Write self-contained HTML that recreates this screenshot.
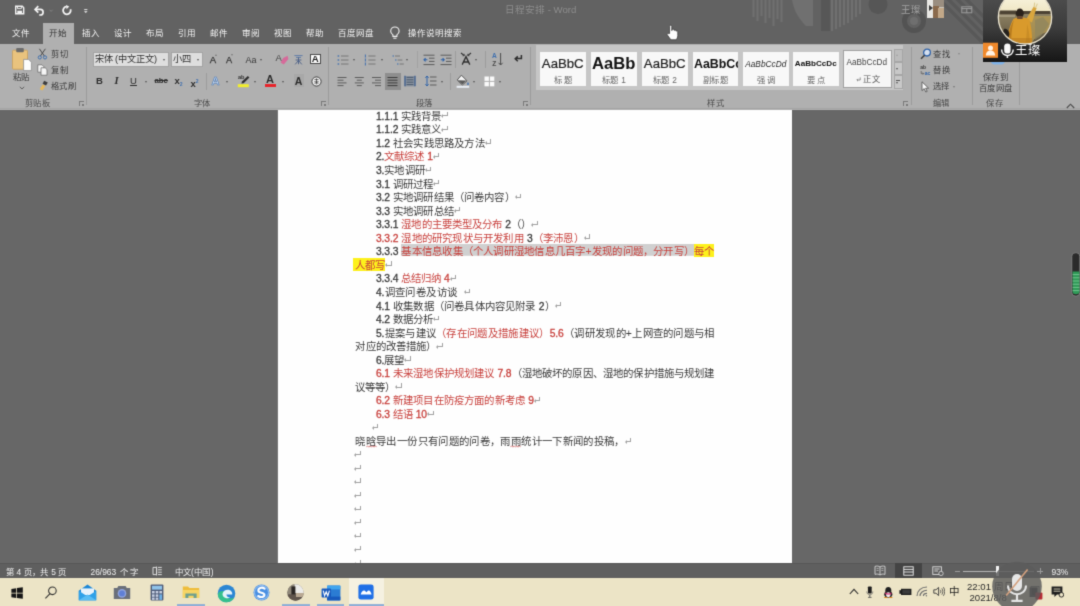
<!DOCTYPE html>
<html lang="zh-CN">
<head>
<meta charset="utf-8">
<title>日程安排 - Word</title>
<style>
html,body{margin:0;padding:0}
html{background:#676767}
body{width:1080px;height:606px;overflow:hidden;position:relative;background:#676767;font-family:"Liberation Sans",sans-serif;font-size:9px;color:#222;filter:url(#soft)}
div,svg{position:absolute;box-sizing:border-box}
/* ---------- window chrome ---------- */
#titlebar{left:0;top:0;width:1080px;height:44px;background:#626262;overflow:hidden}
#ribbon{left:0;top:44px;width:1080px;height:65.5px;background:#b0b0b0}
#ribbonline{left:0;top:107.6px;width:1080px;height:1.9px;background:#a3a3a3}
#tab-home{left:43px;top:23px;width:31px;height:21px;background:#b0b0b0}
/* title/tab text helpers */
.t{height:12px;line-height:12px;white-space:nowrap;text-align:justify;text-align-last:justify;overflow:visible}
.tab{top:26.6px;font-size:8.5px;color:#f4f4f4}
.tab.on{color:#333}
/* ---------- ribbon ---------- */
.rt{height:11px;line-height:11px;font-size:8.3px;color:#3a3a3a;white-space:nowrap;text-align:justify;text-align-last:justify}
.gl{top:97.5px;color:#4a4a4a}
.sep{top:47px;width:1px;height:58px;background:#9b9b9b}
.box{background:#dedede;border:1px solid #a4a4a4}
.ar{width:0;height:0;border-left:1.8px solid transparent;border-right:1.8px solid transparent;border-top:2.2px solid #555}
.lb{font-size:9.5px;font-weight:bold;color:#2c2c2c;height:12px;line-height:12px;white-space:nowrap;text-align:center}
.dl{width:5px;height:5px;border-left:1px solid #7a7a7a;border-top:1px solid #7a7a7a}
.dl::after{content:"";position:absolute;left:2px;top:2px;width:2px;height:2px;background:#7a7a7a}
/* ---------- document ---------- */
#page{left:276.6px;top:109.5px;width:515px;height:453.5px;background:#fefefe;overflow:hidden;border-left:0.6px solid #777}
.ln{height:14px;line-height:14px;font-size:10.4px;color:#3a3a3a;white-space:nowrap;text-align:justify;text-align-last:justify;overflow:visible}
.ln b{font-weight:normal;color:#c8403c}
.ln .n{font-size:10.3px;letter-spacing:-0.1px;-webkit-text-stroke:0.3px currentColor}
.hg{padding:2.2px 0 0;background:linear-gradient(#d0d0d0,#d0d0d0) no-repeat 0 0/100% 11.8px}
.hy{padding:2px 0 0;background:linear-gradient(#fdf11c,#fdf11c) no-repeat 0 0/100% 13.6px}
.r{display:inline-block;position:relative;width:4.6px;height:3.2px;border-right:0.9px solid #a2a2a2;border-bottom:0.9px solid #a2a2a2;margin-left:1px;vertical-align:3.2px}
.r::before{content:"";position:absolute;left:-1px;bottom:-2.6px;border-top:2.1px solid transparent;border-bottom:2.1px solid transparent;border-right:2.6px solid #a2a2a2}
/* ---------- status + taskbar ---------- */
#status{left:0;top:563px;width:1080px;height:15px;background:#5f5f5f;border-top:1px solid #575757}
.st{top:565.8px;height:12px;line-height:12px;font-size:8.4px;color:#f0f0f0;white-space:nowrap;text-align:justify;text-align-last:justify}
.ul{top:604.4px;height:1.6px;background:#93b1d6}
.tk{font-size:9.6px;color:#2a2a2a;height:11px;line-height:11px;white-space:nowrap;text-align:justify;text-align-last:justify}
#taskbar{left:0;top:578px;width:1080px;height:28px;background:#ece4c6}
</style>
</head>
<body>
<svg width="0" height="0" style="left:0;top:0"><defs><filter id="soft" x="0" y="0" width="100%" height="100%" color-interpolation-filters="sRGB"><feConvolveMatrix order="3" kernelMatrix="0.0192 0.1001 0.0192 0.1001 0.5228 0.1001 0.0192 0.1001 0.0192" divisor="1" edgeMode="duplicate" preserveAlpha="true"/></filter></defs></svg>

<!-- ================= TITLE BAR + TABS ================= -->
<div id="titlebar">
  <!-- decorative office background pattern (faint) -->
  <svg style="left:730px;top:0" width="270" height="44" viewBox="0 0 270 44">
    <g fill="#707070">
      <rect x="22.5" y="0" width="2" height="17"/><rect x="26.5" y="0" width="2" height="21"/><rect x="30.5" y="0" width="2" height="16"/>
      <rect x="34.5" y="0" width="2" height="23"/><rect x="38.5" y="0" width="2" height="18"/><rect x="42.5" y="0" width="2" height="26"/>
      <rect x="46.5" y="0" width="2" height="19"/><rect x="50.5" y="0" width="2" height="22"/>
      <path d="M62 0 H83 V26 H76 C70 20 64 12 62 0 Z"/>
      <rect x="101" y="0" width="2" height="31"/><rect x="105" y="0" width="2" height="29"/><rect x="109" y="0" width="2" height="27"/>
      <rect x="113" y="0" width="2" height="25"/><rect x="117" y="0" width="2" height="23"/><rect x="121" y="0" width="2" height="20"/>
      <rect x="125" y="0" width="2" height="17"/><rect x="129" y="0" width="2" height="14"/>
    </g>
    <rect x="91" y="0" width="9" height="31" fill="#575757"/>
    <circle cx="148" cy="4.5" r="9.5" fill="#565656"/>
    <circle cx="184" cy="21" r="9.5" fill="none" stroke="#535353" stroke-width="5"/>
    <circle cx="184" cy="21" r="4" fill="#6f6f6f"/>
    <path d="M206 -4 L254 44 M215 -4 L263 44 M224 -4 L272 44 M233 -4 L281 44" stroke="#585858" stroke-width="3.2" fill="none"/>
  </svg>
  <!-- quick access toolbar -->
  <svg style="left:13px;top:4px" width="80" height="14" viewBox="0 0 80 14" fill="none" stroke="#f4f4f4" stroke-width="1.4">
    <path d="M2.7 2.3 H9.3 L10.7 3.7 V9.7 H2.7 Z"/><path d="M4.5 2.3 V4.6 H8.4 V2.3" stroke-width="0.9"/><rect x="4.3" y="6.7" width="4.8" height="3" fill="#f4f4f4" stroke="none"/>
    <path d="M22.4 5.4 H27.3 A2.8 2.8 0 0 1 27.3 11 H26.2" stroke-width="1.7"/><path d="M25.3 2.2 L22.1 5.4 L25.3 8.6" stroke-width="1.7"/>
    <path d="M36.6 5.8 l1.5 1.6 l1.5 -1.6" stroke="#858585" stroke-width="0.9"/>
    <path d="M57.5 5.3 A3.8 3.8 0 1 1 53.4 2.7" stroke-width="1.8"/><path d="M53 0.9 L56.2 2.6 L53.6 5.2 Z" fill="#f4f4f4" stroke="none"/>
    <path d="M71.2 5.6 H74.4" stroke-width="0.9"/><path d="M71 7.2 L72.8 9 L74.6 7.2 Z" fill="#f4f4f4" stroke="none"/>
  </svg>
  <div class="t" style="left:505px;top:4px;width:69px;font-size:9.6px;color:#8d8d8d">日程安排 - Word</div>
  <div class="t" style="left:900.5px;top:4px;width:19.5px;font-size:9.4px;color:#a2a2a2">王璨</div>
  <!-- small account picture -->
  <div style="left:927px;top:0;width:17px;height:17.5px;overflow:hidden;background:#c9c5bb">
    <div style="left:0;top:0;width:6px;height:18px;background:#e9e8e4"></div>
    <div style="left:6px;top:0;width:11px;height:7px;background:#9a8e80"></div>
    <div style="left:6px;top:6px;width:6px;height:12px;background:#8a6a4c"></div>
    <div style="left:11px;top:8px;width:6px;height:10px;background:#c2a888"></div><div style="left:2px;top:5px;width:0;height:0;border-top:3px solid transparent;border-bottom:3px solid transparent;border-left:4px solid #3a3a3a"></div>
  </div>
  <svg style="left:961px;top:6px" width="12" height="8" viewBox="0 0 12 8" fill="none" stroke="#9c9c9c" stroke-width="1"><rect x="0.8" y="0.8" width="10" height="6"/><path d="M0.8 2.6 H10.8 M5.8 2.6 V6.8"/></svg>
</div>
<div id="tab-home"></div>
<div class="t tab" style="left:12.3px;width:16.8px">文件</div>
<div class="t tab on" style="left:49px;width:18px">开始</div>
<div class="t tab" style="left:81.6px;width:16.8px">插入</div>
<div class="t tab" style="left:113.9px;width:16.8px">设计</div>
<div class="t tab" style="left:145.9px;width:16.8px">布局</div>
<div class="t tab" style="left:177.7px;width:16.8px">引用</div>
<div class="t tab" style="left:209.5px;width:16.8px">邮件</div>
<div class="t tab" style="left:241.5px;width:16.8px">审阅</div>
<div class="t tab" style="left:273.9px;width:16.8px">视图</div>
<div class="t tab" style="left:305.9px;width:16.8px">帮助</div>
<div class="t tab" style="left:338px;width:34.5px">百度网盘</div>
<svg style="left:389px;top:26px" width="12" height="14" viewBox="0 0 12 14" fill="none" stroke="#f2f2f2" stroke-width="1.1"><path d="M3.9 8.9 C2.4 7.8 1.7 6.6 1.7 5.2 A4.2 4.2 0 0 1 10.1 5.2 C10.1 6.6 9.4 7.8 7.9 8.9 V10.4 H3.9 Z"/><path d="M4.3 12.2 H7.5"/></svg>
<div class="t tab" style="left:408px;width:51px">操作说明搜索</div>
<!-- mouse pointer (hand) -->
<svg style="left:666px;top:24px" width="13" height="17" viewBox="0 0 13 17"><path d="M3.6 9.4 V2.3 a1.1 1.1 0 0 1 2.2 0 V6.6 l0.3 -0.9 a1 1 0 0 1 1.9 0.2 l0.2 0.5 a1 1 0 0 1 1.8 0.3 l0.2 0.5 a0.9 0.9 0 0 1 1.6 0.6 V11.6 c0 2 -1 3.2 -1.6 4.2 H4.8 c-0.9 -1.6 -2.6 -3.4 -3.6 -5 c-0.6 -1.1 0.8 -2 1.6 -1.1 Z" fill="#fcfcfc" stroke="#3c3c3c" stroke-width="0.8"/></svg>

<!-- ================= RIBBON ================= -->
<div id="ribbon"></div>
<div id="ribbonline"></div>
<!-- group separators -->
<div class="sep" style="left:86px"></div><div class="sep" style="left:328px"></div><div class="sep" style="left:530px"></div>
<div class="sep" style="left:911px"></div><div class="sep" style="left:972px"></div><div class="sep" style="left:1019px"></div>
<!-- group labels -->
<div class="rt gl" style="left:24.5px;width:25px">剪贴板</div><div class="dl" style="left:79px;top:101px"></div>
<div class="rt gl" style="left:193.5px;width:16px">字体</div><div class="dl" style="left:321px;top:101px"></div>
<div class="rt gl" style="left:415.5px;width:16.5px">段落</div><div class="dl" style="left:523px;top:101px"></div>
<div class="rt gl" style="left:707px;width:16.5px">样式</div><div class="dl" style="left:903px;top:101px"></div>
<div class="rt gl" style="left:932.5px;width:16.5px">编辑</div>
<div class="rt gl" style="left:986px;width:16.5px">保存</div>

<!-- ===== clipboard group ===== -->
<svg style="left:11px;top:47px" width="22" height="26" viewBox="0 0 22 26">
  <rect x="1.5" y="3.2" width="15" height="19" rx="1" fill="#e9c37e" stroke="#c9a059" stroke-width="0.8"/>
  <rect x="5.2" y="1" width="7.6" height="4.2" rx="1" fill="#6b6b6b"/>
  <path d="M12.6 12.4 H17.6 L20.4 15.2 V23.6 H12.6 Z" fill="#fdfdfd" stroke="#8e8e8e" stroke-width="0.8"/>
</svg>
<div class="rt" style="left:12.5px;top:71.5px;width:16.5px">粘贴</div>
<svg style="left:18.5px;top:85.5px" width="6" height="4" viewBox="0 0 6 4" fill="none" stroke="#555" stroke-width="0.9"><path d="M0.8 0.8 L3 3 L5.2 0.8"/></svg>
<svg style="left:37px;top:48px" width="11" height="12" viewBox="0 0 11 12" fill="none" stroke="#4a4a4a" stroke-width="1"><path d="M2.4 0.8 L7.4 8 M8.4 0.8 L3.4 8"/><circle cx="2.8" cy="9.4" r="1.6" stroke="#3f6fae"/><circle cx="8" cy="9.4" r="1.6" stroke="#3f6fae"/></svg>
<div class="rt" style="left:51px;top:48.5px;width:16.5px">剪切</div>
<svg style="left:37px;top:64px" width="11" height="12" viewBox="0 0 11 12" fill="#f6f6f6" stroke="#6a6a6a" stroke-width="0.8"><path d="M0.8 0.8 H5 L6.8 2.6 V8.2 H0.8 Z"/><path d="M4 3.8 H8.2 L10 5.6 V11.2 H4 Z"/></svg>
<div class="rt" style="left:51px;top:64.5px;width:16.5px">复制</div>
<svg style="left:39px;top:80px" width="10" height="11" viewBox="0 0 10 11"><path d="M5.2 0.8 L8.8 2.6 L7 5.4 L3.6 3.8 Z" fill="#3c3c3c"/><path d="M3.6 4.4 L6.4 5.8 L3.4 10.4 L0.8 9 Z" fill="#e7b95a"/></svg>
<div class="rt" style="left:51px;top:80.5px;width:24.5px">格式刷</div>

<!-- ===== font group ===== -->
<div class="box" style="left:92.5px;top:52px;width:76.5px;height:15px"></div>
<div class="rt" style="left:94.5px;top:54px;width:56.5px;font-size:9.2px;color:#2e2e2e">宋体 (中文正文)</div>
<div class="ar" style="left:162.5px;top:58.5px"></div>
<div class="box" style="left:170.5px;top:52px;width:32px;height:15px"></div>
<div class="rt" style="left:173px;top:54px;width:16.5px;font-size:9.2px;color:#2e2e2e">小四</div>
<div class="ar" style="left:196.5px;top:58.5px"></div>
<div class="lb" style="left:208.5px;top:54px;width:9px;font-weight:normal;font-size:9.6px;color:#333;-webkit-text-stroke:0.25px #333">A</div><div class="ar" style="left:214.6px;top:53.5px;transform:rotate(180deg) scale(.8)"></div>
<div class="lb" style="left:224.5px;top:54.4px;width:9px;font-weight:normal;font-size:9.2px;color:#333;-webkit-text-stroke:0.25px #333">A</div><div class="ar" style="left:231.4px;top:54px;transform:scale(.8)"></div>
<div class="lb" style="left:245px;top:53.5px;width:12px;font-weight:normal;font-size:9px;color:#383838">Aa</div><div class="ar" style="left:259.5px;top:59px"></div>
<svg style="left:275px;top:52px" width="14" height="14" viewBox="0 0 14 14"><text x="0.5" y="9" font-family="Liberation Sans, sans-serif" font-size="9.5" fill="#444">A</text><path d="M8.2 6 L12.6 3.8 L13.4 7 L8.8 12.4 L5.6 10.4 Z" fill="#d66a9a"/></svg>
<svg style="left:293px;top:53.5px" width="11" height="12" viewBox="0 0 11 12" fill="none" stroke="#5877a6" stroke-width="0.9"><path d="M1.4 1.6 H9.6 M3 3.4 H8"/><path d="M5.5 3.4 V10.2 M2.6 6 H8.4 M2.2 10.4 L5.5 6.4 L8.8 10.4" stroke="#4a5f86"/></svg>
<div style="left:309.8px;top:53.8px;width:10.8px;height:10.6px;background:#fdfdfd;border:0.8px solid #4a4a4a"></div>
<div class="lb" style="left:310px;top:53.2px;width:10.5px;font-size:9.6px;color:#1e1e1e">A</div>
<!-- second row -->
<div class="lb" style="left:95.5px;top:75px;width:8px">B</div>
<div class="lb" style="left:112.5px;top:75px;width:8px;font-family:'Liberation Serif',serif;font-style:italic;font-size:10.5px">I</div>
<div class="lb" style="left:129.5px;top:75px;width:8px;text-decoration:underline;font-weight:normal">U</div><div class="ar" style="left:144.5px;top:80.5px"></div>
<div class="lb" style="left:154.5px;top:75px;width:13px;font-size:7.8px;text-decoration:line-through">abc</div>
<div class="lb" style="left:174px;top:75px;width:9px;font-size:9.5px">x<span style="font-size:5px;vertical-align:-2px;color:#3f6fae">2</span></div>
<div class="lb" style="left:190px;top:75px;width:9px;font-size:9.5px">x<span style="font-size:5px;vertical-align:4px;color:#3f6fae">2</span></div>
<div style="left:205.5px;top:73px;width:1px;height:17px;background:#9d9d9d"></div>
<div class="lb" style="left:210px;top:74.5px;width:11px;font-size:11px;color:#c3d4ea;-webkit-text-stroke:0.6px #4c79b4">A</div><div class="ar" style="left:225.5px;top:80.5px"></div>
<svg style="left:237px;top:73px" width="13" height="15" viewBox="0 0 13 15"><text x="1" y="5.6" font-family="Liberation Sans, sans-serif" font-size="5.6" font-weight="bold" fill="#333">ab</text><path d="M10.8 3 L12.4 4.4 L6.6 10.2 L4.4 10.6 L5 8.6 Z" fill="#2e2e2e"/><rect x="0.8" y="11.2" width="11" height="3" fill="#f2ee2c"/></svg>
<div class="ar" style="left:253.8px;top:80.5px"></div>
<div class="lb" style="left:264.5px;top:72.5px;width:11px;font-size:11px">A</div><div style="left:264.5px;top:84px;width:11px;height:3px;background:#e8232a"></div><div class="ar" style="left:282px;top:80.5px"></div>
<div style="left:293.5px;top:74px;width:10px;height:13px;background:#a8a8a8"></div><div class="lb" style="left:293px;top:75px;width:11px;font-size:10.5px">A</div>
<svg style="left:310.5px;top:75.5px" width="11" height="11" viewBox="0 0 11 11" fill="none" stroke="#333" stroke-width="0.9"><circle cx="5.5" cy="5.5" r="4.6" fill="#f1f1f1"/><path d="M3.4 3.6 H7.6 M5.5 2.4 V8.4 M3.2 5.8 H7.8 M3.6 8 L5.5 6 L7.4 8" stroke-width="0.7"/></svg>

<!-- ===== paragraph group ===== -->
<svg style="left:336.5px;top:53.5px" width="12" height="12" viewBox="0 0 12 12" fill="none" stroke="#6a6a6a" stroke-width="0.9" opacity="0.9"><path d="M4 2 H11.5 M4 6 H11.5 M4 10 H11.5"/><path d="M0.6 2 H2.2 M0.6 6 H2.2 M0.6 10 H2.2" stroke="#3f6fae" stroke-width="1.6"/></svg><div class="ar" style="left:353.4px;top:58.5px"></div>
<svg style="left:363.5px;top:53.5px" width="12" height="12" viewBox="0 0 12 12" fill="none" stroke="#6a6a6a" stroke-width="0.9" opacity="0.9"><path d="M4.4 2 H11.5 M4.4 6 H11.5 M4.4 10 H11.5"/><path d="M1.4 0.6 V3.4 M1.4 4.6 V7.4 M1.4 8.6 V11.4" stroke="#3f6fae" stroke-width="1.1"/></svg><div class="ar" style="left:380.8px;top:58.5px"></div>
<svg style="left:391.5px;top:53.5px" width="12" height="12" viewBox="0 0 12 12" fill="none" stroke="#6a6a6a" stroke-width="0.9" opacity="0.9"><path d="M3 2 H8 M5.6 6 H10.4 M7.6 10 H11.8"/><path d="M0.6 2 H1.8 M3.2 6 H4.4 M5.2 10 H6.4" stroke="#3f6fae" stroke-width="1.5"/></svg><div class="ar" style="left:406.4px;top:58.5px"></div>
<svg style="left:422.5px;top:53.5px" width="12" height="12" viewBox="0 0 12 12" fill="none" stroke="#5a5a5a" stroke-width="1"><path d="M0.5 1.2 H11.5 M6 4.2 H11.5 M6 7.4 H11.5 M0.5 10.6 H11.5"/><path d="M4.4 5.8 H1 M2.6 4.2 L1 5.8 L2.6 7.4" stroke="#2f62a8" stroke-width="1.1"/></svg>
<svg style="left:440px;top:53.5px" width="12" height="12" viewBox="0 0 12 12" fill="none" stroke="#5a5a5a" stroke-width="1"><path d="M0.5 1.2 H11.5 M6 4.2 H11.5 M6 7.4 H11.5 M0.5 10.6 H11.5"/><path d="M0.8 5.8 H4.2 M2.6 4.2 L4.2 5.8 L2.6 7.4" stroke="#2f62a8" stroke-width="1.1"/></svg>
<div style="left:455px;top:51px;width:1px;height:17px;background:#9d9d9d"></div>
<svg style="left:460px;top:52px" width="12" height="14" viewBox="0 0 12 14" fill="none" stroke="#2e2e2e" stroke-width="1.3"><path d="M2.2 12.6 L6 4.6 L9.8 12.6 M3.6 10 H8.4"/><path d="M1 1 L4 3.4 M11 1 L8 3.4" stroke-width="1.1"/><path d="M2.6 3.8 L4.4 3.6 L4 1.8 M9.4 3.8 L7.6 3.6 L8 1.8" stroke-width="0.8"/></svg><div class="ar" style="left:475.4px;top:58.5px"></div>
<div style="left:485px;top:51px;width:1px;height:17px;background:#9d9d9d"></div>
<svg style="left:492px;top:52px" width="12" height="15" viewBox="0 0 12 15" fill="none"><text x="0" y="6.2" font-family="Liberation Sans, sans-serif" font-size="6.6" font-weight="bold" fill="#3f6fae">A</text><text x="0.2" y="13.6" font-family="Liberation Sans, sans-serif" font-size="6.6" font-weight="bold" fill="#4a4a4a">Z</text><path d="M8.6 1 V13 M6.6 10.8 L8.6 13 L10.6 10.8" stroke="#4a4a4a" stroke-width="1"/></svg>
<div style="left:417px;top:51px;width:1px;height:17px;background:#a2a2a2"></div>
<svg style="left:512.5px;top:54px" width="10" height="10" viewBox="0 0 10 10" fill="none" stroke="#2e2e2e" stroke-width="1.5"><path d="M8.4 1 V4.6 H2.6 M4.8 2.4 L2.2 4.8 L4.8 7.2"/></svg>
<svg style="left:336.5px;top:75.5px" width="11" height="11" viewBox="0 0 11 11" stroke="#5c5c5c" stroke-width="1" fill="none"><path d="M0.5 1.5 H9.5"/><path d="M0.5 4.2 H6.5"/><path d="M0.5 6.9 H9.5"/><path d="M0.5 9.6 H6.5"/></svg>
<svg style="left:353.5px;top:75.5px" width="11" height="11" viewBox="0 0 11 11" stroke="#5c5c5c" stroke-width="1" fill="none"><path d="M0.8 1.5 H9.8"/><path d="M2.8 4.2 H7.8"/><path d="M0.8 6.9 H9.8"/><path d="M2.8 9.6 H7.8"/></svg>
<svg style="left:370.5px;top:75.5px" width="11" height="11" viewBox="0 0 11 11" stroke="#5c5c5c" stroke-width="1" fill="none"><path d="M1.0 1.5 H10.0"/><path d="M4.0 4.2 H10.0"/><path d="M1.0 6.9 H10.0"/><path d="M4.0 9.6 H10.0"/></svg>
<div style="left:385px;top:73px;width:15.5px;height:16.5px;background:#8e8e8e"></div><svg style="left:387.3px;top:75.5px" width="11" height="11" viewBox="0 0 11 11" stroke="#3c3c3c" stroke-width="1" fill="none"><path d="M0.5 1.5 H10.5"/><path d="M0.5 4.2 H10.5"/><path d="M0.5 6.9 H10.5"/><path d="M0.5 9.6 H10.5"/></svg>
<svg style="left:404px;top:75px" width="12" height="12" viewBox="0 0 12 12" fill="none" stroke="#3f5f8f" stroke-width="1"><rect x="0.6" y="1" width="10.4" height="10.4" fill="#6c7b92" fill-opacity="0.55" stroke="none"/><path d="M1 0.8 V11.2 M11 0.8 V11.2" stroke-width="1.3"/><path d="M2.6 2.4 H9.4 M2.6 4.8 H9.4 M2.6 7.2 H9.4 M2.6 9.6 H9.4" stroke="#4a5a6e"/></svg>

<svg style="left:425px;top:75px" width="12" height="12" viewBox="0 0 12 12" fill="none" stroke="#5a5a5a" stroke-width="1"><path d="M5 2 H11.5 M5 6 H11.5 M5 10 H11.5"/><path d="M2 1 V11 M0.4 2.8 L2 1 L3.6 2.8 M0.4 9.2 L2 11 L3.6 9.2" stroke="#2f62a8"/></svg><div class="ar" style="left:441px;top:80.5px"></div>
<div style="left:450px;top:73px;width:1px;height:17px;background:#9d9d9d"></div>
<svg style="left:456px;top:73.5px" width="14" height="14" viewBox="0 0 14 14"><path d="M5.4 1.2 L11 6.8 L6.4 11 L1.2 6 Z" fill="#f3f3f3" stroke="#4a4a4a" stroke-width="0.9"/><path d="M1.6 6.2 L10.6 6.6 L6.4 10.6 Z" fill="#5a5a5a"/><path d="M12 8 C12.8 9.4 13.2 10 12.6 10.8 C12 11.4 11.2 11 11.2 10.2 C11.2 9.4 11.6 8.8 12 8 Z" fill="#3f6fae"/><rect x="0.6" y="11.8" width="12.6" height="2" fill="#e9eef5"/></svg><div class="ar" style="left:473px;top:80.5px"></div>
<svg style="left:483.5px;top:75.5px" width="11" height="11" viewBox="0 0 11 11"><rect x="0.5" y="0.5" width="4.4" height="4.4" fill="#fafafa"/><rect x="5.9" y="0.5" width="4.4" height="4.4" fill="#fafafa"/><rect x="0.5" y="5.9" width="4.4" height="4.4" fill="#fafafa"/><rect x="5.9" y="5.9" width="4.4" height="4.4" fill="#fafafa"/></svg><div class="ar" style="left:499.4px;top:80.5px"></div>
<!-- ===== styles gallery ===== -->
<div style="left:536px;top:45px;width:367px;height:45px;background:#c6c6c6"></div>
<div style="left:540px;top:52px;width:45.5px;height:34.2px;background:#f8f8f8;overflow:hidden"><div style="left:0;top:3px;width:45.5px;height:18px;line-height:18px;text-align:center;white-space:nowrap;color:#1e1e1e;-webkit-text-stroke:0.2px #1e1e1e;font-size:13.2px">AaBbC</div><div class="rt" style="left:14px;top:22.6px;width:17.5px;color:#666">标题</div></div>
<div style="left:591px;top:52px;width:45.5px;height:34.2px;background:#f8f8f8;overflow:hidden"><div style="left:0;top:3px;width:45.5px;height:18px;line-height:18px;text-align:center;white-space:nowrap;color:#2a2a2a;font-size:16.6px;font-weight:bold;color:#111">AaBb</div><div class="rt" style="left:10.75px;top:22.6px;width:24px;color:#666">标题 1</div></div>
<div style="left:642px;top:52px;width:45.5px;height:34.2px;background:#f8f8f8;overflow:hidden"><div style="left:0;top:3px;width:45.5px;height:18px;line-height:18px;text-align:center;white-space:nowrap;color:#1e1e1e;-webkit-text-stroke:0.2px #1e1e1e;font-size:13.2px">AaBbC</div><div class="rt" style="left:10.75px;top:22.6px;width:24px;color:#666">标题 2</div></div>
<div style="left:692.5px;top:52px;width:45.5px;height:34.2px;background:#f8f8f8;overflow:hidden"><div style="left:0;top:3px;width:45.5px;height:18px;line-height:18px;text-align:center;white-space:nowrap;color:#2a2a2a;font-size:12.4px;font-weight:bold;color:#111;text-align:left;text-indent:1.5px">AaBbCc</div><div class="rt" style="left:10px;top:22.6px;width:25.5px;color:#666">副标题</div></div>
<div style="left:743px;top:52px;width:45.5px;height:34.2px;background:#f8f8f8;overflow:hidden"><div style="left:0;top:3px;width:45.5px;height:18px;line-height:18px;text-align:center;white-space:nowrap;color:#2a2a2a;font-size:8.3px;font-style:italic">AaBbCcDd</div><div class="rt" style="left:14px;top:22.6px;width:17.5px;color:#666">强调</div></div>
<div style="left:793px;top:52px;width:45.5px;height:34.2px;background:#f8f8f8;overflow:hidden"><div style="left:0;top:3px;width:45.5px;height:18px;line-height:18px;text-align:center;white-space:nowrap;color:#2a2a2a;font-size:8.1px;font-weight:bold;color:#111">AaBbCcDc</div><div class="rt" style="left:14px;top:22.6px;width:17.5px;color:#666">要点</div></div>
<div style="left:843px;top:50px;width:48.5px;height:37.5px;background:#f6f6f6;border:1.6px solid #a0a0a0;overflow:hidden"><div style="left:0;top:3.4px;width:45.5px;height:18px;line-height:18px;text-align:center;white-space:nowrap;color:#444;font-size:8.2px">AaBbCcDd</div><svg style="left:11.5px;top:26px" width="5" height="5" viewBox="0 0 5 5" fill="none" stroke="#777" stroke-width="0.8"><path d="M4.2 0.4 V3 H1 M2 1.8 L0.8 3 L2 4.2"/></svg><div class="rt" style="left:18.5px;top:22.9px;width:17.5px;color:#555">正文</div></div>
<div style="left:893.5px;top:48.5px;width:9px;height:13.4px;background:#bcbcbc;border:1px solid #a6a6a6"></div><div style="left:893.5px;top:61.9px;width:9px;height:13.4px;background:#c8c8c8;border:1px solid #a6a6a6"></div><div style="left:893.5px;top:75.3px;width:9px;height:13.4px;background:#c8c8c8;border:1px solid #a6a6a6"></div>
<div class="ar" style="left:896.2px;top:54px;transform:rotate(180deg);border-top-color:#a0a0a0"></div><div class="ar" style="left:896.2px;top:67.6px"></div><div class="ar" style="left:896.2px;top:82.4px"></div><div style="left:896px;top:79.8px;width:4px;height:1px;background:#555"></div>
<!-- ===== editing group ===== -->
<svg style="left:919.5px;top:47.5px" width="12" height="12" viewBox="0 0 12 12" fill="none" stroke="#2f62a8" stroke-width="1.3"><circle cx="7" cy="4.6" r="3.4" fill="#d5dfee"/><path d="M4.6 7.2 L1 10.8" stroke="#3a3a3a" stroke-width="1.5"/></svg>
<div class="rt" style="left:932.5px;top:48.5px;width:17px">查找</div><div class="ar" style="left:958.4px;top:53px;border-top-color:#888"></div>
<svg style="left:919.5px;top:63.5px" width="12" height="12" viewBox="0 0 12 12"><text x="0.2" y="5" font-family="Liberation Sans, sans-serif" font-size="5" font-weight="bold" fill="#3a3a3a">ab</text><text x="4.8" y="11.4" font-family="Liberation Sans, sans-serif" font-size="5" font-weight="bold" fill="#2f62a8">ac</text><path d="M1.2 7 V9.6 H3.8 M2.8 8.6 L3.8 9.6 L2.8 10.6" fill="none" stroke="#555" stroke-width="0.7"/></svg>
<div class="rt" style="left:932.5px;top:64.5px;width:17px">替换</div>
<svg style="left:921px;top:80.5px" width="9" height="12" viewBox="0 0 9 12"><path d="M1 0.8 V9.6 L3.2 7.6 L4.8 11 L6.2 10.4 L4.6 7.2 H7.6 Z" fill="#fbfbfb" stroke="#4a4a4a" stroke-width="0.8"/></svg>
<div class="rt" style="left:932.5px;top:81px;width:16.5px">选择</div><div class="ar" style="left:952.8px;top:86px;border-top-color:#777"></div>
<!-- ===== save to baidu group ===== -->
<svg style="left:989px;top:50.5px" width="18" height="18" viewBox="0 0 18 18"><circle cx="5.5" cy="9" r="4" fill="#7fb2e8"/><circle cx="12" cy="8" r="5" fill="#74abe6"/><rect x="3" y="9" width="12" height="4.4" rx="2.2" fill="#7fb2e8"/></svg>
<div class="rt" style="left:982.5px;top:72px;width:25px">保存到</div><div class="rt" style="left:978.5px;top:82.6px;width:33.5px">百度网盘</div>
<svg style="left:1066px;top:102.5px" width="9" height="6" viewBox="0 0 9 6" fill="none" stroke="#4a4a4a" stroke-width="1.1"><path d="M0.8 5 L4.5 1.2 L8.2 5"/></svg>

<!-- ================= DOCUMENT PAGE ================= -->
<div id="page">
<div class="ln" style="left:98.3px;top:0.1px;width:71.5px"><span class="n">1.1.1</span> 实践背景<span class="r"></span></div>
<div class="ln" style="left:98.3px;top:13.7px;width:71.5px"><span class="n">1.1.2</span> 实践意义<span class="r"></span></div>
<div class="ln" style="left:98.3px;top:27.3px;width:115.5px"><span class="n">1.2</span> 社会实践思路及方法<span class="r"></span></div>
<div class="ln" style="left:98.3px;top:40.8px;width:62.5px"><span class="n">2.</span><b>文献综述 <span class="n">1</span></b><span class="r"></span></div>
<div class="ln" style="left:98.3px;top:54.4px;width:55.5px"><span class="n">3.</span>实地调研<span class="r"></span></div>
<div class="ln" style="left:98.3px;top:68.0px;width:63.5px"><span class="n">3.1</span> 调研过程<span class="r"></span></div>
<div class="ln" style="left:98.3px;top:81.5px;width:145.5px"><span class="n">3.2</span> 实地调研结果（问卷内容）<span class="r"></span></div>
<div class="ln" style="left:98.3px;top:95.1px;width:84.5px"><span class="n">3.3</span> 实地调研总结<span class="r"></span></div>
<div class="ln" style="left:98.3px;top:108.6px;width:162.0px"><span class="n">3.3.1</span> <b>湿地的主要类型及分布</b> <span class="n">2</span>（）<span class="r"></span></div>
<div class="ln" style="left:98.3px;top:122.2px;width:214.5px"><b><span class="n">3.3.2</span> 湿地的研究现状与开发利用</b> <span class="n">3</span><b>（李沛恩）</b><span class="r"></span></div>
<div class="ln" style="left:98.3px;top:135.7px;width:338.5px"><span class="n">3.3.3</span> <b class="hg">基本信息收集（个人调研湿地信息几百字+发现的问题，分开写）</b><b class="hy">每个</b></div>
<div class="ln" style="left:77.8px;top:149.3px;width:36.0px"><b class="hy" style="margin-left:-2px;padding-left:2px">人都写</b><span class="r"></span></div>
<div class="ln" style="left:98.3px;top:162.9px;width:79.5px"><span class="n">3.3.4</span> <b>总结归纳 <span class="n">4</span></b><span class="r"></span></div>
<div class="ln" style="left:98.3px;top:176.4px;width:94.5px"><span class="n">4.</span>调查问卷及访谈 &nbsp;<span class="r"></span></div>
<div class="ln" style="left:98.3px;top:190.0px;width:185.5px"><span class="n">4.1</span> 收集数据（问卷具体内容见附录 <span class="n">2</span>）<span class="r"></span></div>
<div class="ln" style="left:98.3px;top:203.5px;width:63.2px"><span class="n">4.2</span> 数据分析<span class="r"></span></div>
<div class="ln" style="left:98.3px;top:217.1px;width:338.5px"><span class="n">5.</span>提案与建议<b>（存在问题及措施建议）<span class="n">5.6</span></b>（调研发现的+上网查的问题与相</div>
<div class="ln" style="left:77.8px;top:230.7px;width:87.5px">对应的改善措施）<span class="r"></span></div>
<div class="ln" style="left:98.3px;top:244.2px;width:34.5px"><span class="n">6.</span>展望<span class="r"></span></div>
<div class="ln" style="left:98.3px;top:257.8px;width:338.5px"><b><span class="n">6.1</span> 未来湿地保护规划建议 <span class="n">7.8</span></b>（湿地破坏的原因、湿地的保护措施与规划建</div>
<div class="ln" style="left:77.8px;top:271.3px;width:46.0px">议等等）<span class="r"></span></div>
<div class="ln" style="left:98.3px;top:284.9px;width:164.5px"><b><span class="n">6.2</span> 新建项目在防疫方面的新考虑 <span class="n">9</span></b><span class="r"></span></div>
<div class="ln" style="left:98.3px;top:298.5px;width:55.5px"><b><span class="n">6.3</span> 结语 <span class="n">10</span></b><span class="r"></span></div>
<div class="ln" style="left:94.3px;top:312.0px;width:6.0px"><span class="r"></span></div>
<div class="ln" style="left:77.8px;top:325.6px;width:276.0px">晓晗导出一份只有问题的问卷，雨雨统计一下新闻的投稿，<span class="r"></span></div>
<div class="ln" style="left:76.8px;top:339.1px;width:6.5px"><span class="r"></span></div>
<div class="ln" style="left:76.8px;top:352.7px;width:6.5px"><span class="r"></span></div>
<div class="ln" style="left:76.8px;top:366.3px;width:6.5px"><span class="r"></span></div>
<div class="ln" style="left:76.8px;top:379.8px;width:6.5px"><span class="r"></span></div>
<div class="ln" style="left:76.8px;top:393.4px;width:6.5px"><span class="r"></span></div>
<div class="ln" style="left:76.8px;top:406.9px;width:6.5px"><span class="r"></span></div>
<div class="ln" style="left:76.8px;top:420.5px;width:6.5px"><span class="r"></span></div>
<div class="ln" style="left:76.8px;top:434.1px;width:6.5px"><span class="r"></span></div>
<div class="ln" style="left:76.8px;top:447.6px;width:6.5px"><span class="r"></span></div>
<svg style="left:88.3px;top:335.3px" width="11" height="3" viewBox="0 0 11 3" fill="none" stroke="#d25a5a" stroke-width="0.7"><path d="M0.3 2.2 L1.6 0.8 L2.9 2.2 L4.2 0.8 L5.5 2.2 L6.8 0.8 L8.1 2.2 L9.4 0.8 L10.7 2.2"/></svg>
<svg style="left:232.4px;top:335.3px" width="11" height="3" viewBox="0 0 11 3" fill="none" stroke="#d25a5a" stroke-width="0.7"><path d="M0.3 2.2 L1.6 0.8 L2.9 2.2 L4.2 0.8 L5.5 2.2 L6.8 0.8 L8.1 2.2 L9.4 0.8 L10.7 2.2"/></svg>
</div>

<!-- ================= MEETING PARTICIPANT TILE (overlay) ================= -->
<div id="tile" style="left:983px;top:0;width:84px;height:61.6px;background:linear-gradient(#4b4b4b 0%,#3c3c3c 45%,#232323 80%,#161616 100%);overflow:hidden">
  <svg style="left:0;top:0" width="84" height="61" viewBox="0 0 84 61">
    <defs>
      <clipPath id="cav"><circle cx="42" cy="17.3" r="26.4"/></clipPath>
      <linearGradient id="sky" x1="0" y1="0" x2="0" y2="1"><stop offset="0" stop-color="#fbf8e6"/><stop offset="1" stop-color="#efe6c4"/></linearGradient>
      <linearGradient id="field" x1="0" y1="0" x2="0" y2="1"><stop offset="0" stop-color="#918668"/><stop offset="0.5" stop-color="#75694f"/><stop offset="1" stop-color="#514939"/></linearGradient>
    </defs>
    <g clip-path="url(#cav)">
      <rect x="14" y="-10" width="56" height="22" fill="url(#sky)"/>
      <rect x="14" y="11" width="56" height="35" fill="url(#field)"/>
      <path d="M14 10.4 H33 V14.4 H14 Z M36 11 H70 V14 H36 Z" fill="#4d4334"/>
      <path d="M16 14.4 H32 V17 H16 Z" fill="#b1a58c" opacity="0.7"/>
      <path d="M46 16 H70 V30 C62 33 54 34 48 44 Z" fill="#b79c55" opacity="0.75"/>
      <path d="M52 20 L60 17 L66 24 L58 36 L52 40 Z" fill="#8d8460" opacity="0.7"/>
      <!-- person -->
      <path d="M43 19.5 L50.6 6.8 L53.6 8 L49 22.5 Z" fill="#d9a63e"/>
      <path d="M51.2 7.4 L51.6 2.6 M52.6 7.8 L54.4 3.6" stroke="#dccb92" stroke-width="1.1"/>
      <path d="M30.4 19 C33 17 43 17 46.4 19.4 C48.6 27 49.4 37 49 46 H22.6 C24 36 26.4 26 30.4 19 Z" fill="#d99a2c"/>
      <path d="M31 20 C29 26 28.4 34 28 45 H24 C25 35 27 26 31 20 Z" fill="#b87c1f"/><path d="M44 24 C46 30 47 38 47 46 H42 C43.6 38 44 30 44 24 Z" fill="#c48a26" opacity="0.8"/><path d="M24 38 H49 V46 H23 Z" fill="#b0741c" opacity="0.45"/>
      <ellipse cx="36.8" cy="13.2" rx="4" ry="4.6" fill="#2b221b"/>
      <path d="M34.2 16 H39.6 V19 H34.2 Z" fill="#6a4a34"/>
      <path d="M21 29 C23 28 26 30 26.4 34 C26 38 24 40.5 21.4 40 C19.6 37 19.6 32 21 29 Z" fill="#25211d"/>
    </g>
    <circle cx="42" cy="17.3" r="26.7" fill="none" stroke="#ebe4cf" stroke-width="1.3"/>
    <!-- orange host badge -->
    <rect x="0" y="42.7" width="15" height="15.1" fill="#f0892b"/>
    <circle cx="7.5" cy="48" r="2.5" fill="#fff3e6"/><path d="M2.8 55.4 C3.2 51.6 5.4 50.6 7.5 50.6 C9.6 50.6 11.8 51.6 12.2 55.4 Z" fill="#fff3e6"/>
    <!-- microphone -->
    <rect x="21.2" y="43.4" width="6.4" height="10.2" rx="3.2" fill="#f8f8f8"/>
    <path d="M18.6 49.6 C18.6 57.4 30.2 57.4 30.2 49.6" fill="none" stroke="#f8f8f8" stroke-width="1.5"/><path d="M24.4 55.6 V58" stroke="#f8f8f8" stroke-width="1.5"/>
  </svg>
  <div class="t" style="left:32px;top:44.5px;width:25px;height:13px;line-height:13px;font-size:12.4px;color:#fdfdfd">王璨</div>
</div>

<!-- audio level meter at right edge -->
<svg style="left:1071px;top:252px" width="9" height="45" viewBox="0 0 9 45"><rect x="0.8" y="0.8" width="8" height="43.2" rx="3.4" fill="#2b2b2b" stroke="#8a8a8a" stroke-width="0.8"/><path d="M1.6 19.6 H8.4 V40 C8.4 43 1.6 43 1.6 40 Z" fill="#2f9a57"/><path d="M1.6 22.6 H8.4 M1.6 25.8 H8.4 M1.6 29 H8.4 M1.6 32.2 H8.4 M1.6 35.4 H8.4 M1.6 38.6 H8.4" stroke="#8fd3a6" stroke-width="0.7"/></svg>

<!-- ================= STATUS BAR ================= -->
<div id="status"></div>
<div class="st" style="left:5.5px;width:61px">第 4 页，共 5 页</div>
<div class="st" style="left:90.5px;width:47.5px">26/963 个字</div>
<svg style="left:151.5px;top:565.5px" width="11" height="10" viewBox="0 0 11 10" fill="none" stroke="#e8e8e8" stroke-width="0.9"><path d="M1 1.4 H4.6 V8.6 H1 Z M6 1.4 H9.8 M6 3.8 H9.8 M6 6.2 H9.8 M6 8.6 H9.8"/><path d="M4.6 0.4 V9.6" stroke-width="0.7"/></svg>
<div class="st" style="left:174.5px;width:39px">中文(中国)</div>
<!-- view buttons -->
<svg style="left:873.5px;top:565px" width="12" height="11" viewBox="0 0 12 11" fill="none" stroke="#d6d6d6" stroke-width="0.9"><path d="M1 1.4 C3 0.8 4.6 1 6 2 C7.4 1 9 0.8 11 1.4 V9.4 C9 8.8 7.4 9 6 10 C4.6 9 3 8.8 1 9.4 Z M6 2 V10"/><path d="M2.6 3.4 H4.6 M2.6 5.4 H4.6 M7.4 3.4 H9.4 M7.4 5.4 H9.4" stroke-width="0.7"/></svg>
<div style="left:894.5px;top:563px;width:27.5px;height:15px;background:#444444"></div>
<svg style="left:903px;top:565.5px" width="11" height="10" viewBox="0 0 11 10" fill="none" stroke="#f0f0f0" stroke-width="0.9"><rect x="0.8" y="0.8" width="9.4" height="8.4"/><path d="M0.8 3.4 H10.2 M0.8 6 H10.2"/></svg>
<svg style="left:931.5px;top:565.5px" width="12" height="10" viewBox="0 0 12 10" fill="none" stroke="#dcdcdc" stroke-width="0.9"><rect x="0.8" y="0.8" width="8.6" height="7.6"/><path d="M2.4 3 H7.6 M2.4 5 H6"/><circle cx="9" cy="7.4" r="2.2" fill="#5f5f5f" stroke-width="0.8"/></svg>
<!-- zoom slider -->
<div style="left:954.5px;top:570.5px;width:5px;height:1px;background:#9a9a9a"></div>
<div style="left:963px;top:570.5px;width:71px;height:1px;background:#b4b4b4"></div>
<div style="left:995.6px;top:566px;width:3px;height:9.6px;background:#f2f2f2"></div>
<div style="left:1037px;top:570.5px;width:6px;height:1px;background:#9a9a9a"></div><div style="left:1039.5px;top:568px;width:1px;height:6px;background:#9a9a9a"></div>
<div class="st" style="left:1051.5px;width:18px">93%</div>

<!-- ================= TASKBAR ================= -->
<div id="taskbar"></div>
<!-- start + search -->
<svg style="left:11px;top:586.6px" width="12.2" height="12.2" viewBox="0 0 13 13" fill="#151515"><path d="M0.4 2 L5.6 1.2 V6 H0.4 Z M6.4 1.1 L12.6 0.2 V6 H6.4 Z M0.4 6.8 H5.6 V11.6 L0.4 10.8 Z M6.4 6.8 H12.6 V12.6 L6.4 11.7 Z"/></svg>
<svg style="left:44px;top:585px" width="14" height="15" viewBox="0 0 14 15" fill="none" stroke="#2e2e2e" stroke-width="1.05"><circle cx="8.4" cy="5.8" r="3.8"/><path d="M5.8 8.8 L1.4 13.4"/></svg>
<!-- mail -->
<svg style="left:77.5px;top:583.5px" width="19" height="17" viewBox="0 0 19 17"><path d="M0.8 6.8 L9.5 0.6 L18.2 6.8 V16.2 H0.8 Z" fill="#1b86d6"/><path d="M3 4.4 H16 V11 H3 Z" fill="#e8f3fc"/><path d="M0.8 6.8 L9.5 12.4 L18.2 6.8 V16.2 H0.8 Z" fill="#2fa1e8"/><path d="M0.8 16.2 L9.5 10.6 L18.2 16.2 Z" fill="#58bdf4"/></svg>
<!-- camera -->
<svg style="left:112.5px;top:584.5px" width="18" height="15" viewBox="0 0 18 15"><path d="M5.4 1 H12.6 L13.8 3 H17.2 V14 H0.8 V3 H4.2 Z" fill="#6a6f7a"/><circle cx="9" cy="8.4" r="4.3" fill="#8fa3dc"/><circle cx="9" cy="8.4" r="2.9" fill="#5f7fd6"/></svg>
<!-- calculator -->
<svg style="left:149.5px;top:584px" width="14" height="17" viewBox="0 0 14 17"><rect x="0.6" y="0.4" width="12.8" height="16.2" rx="1" fill="#4e5b78"/><rect x="2" y="1.8" width="10" height="3.8" fill="#8fc3ea"/><g fill="#c9d2e4"><rect x="2" y="7" width="2.6" height="2.4"/><rect x="5.7" y="7" width="2.6" height="2.4"/><rect x="9.4" y="7" width="2.6" height="2.4"/><rect x="2" y="10.4" width="2.6" height="2.4"/><rect x="5.7" y="10.4" width="2.6" height="2.4"/><rect x="2" y="13.6" width="2.6" height="2.2"/><rect x="5.7" y="13.6" width="2.6" height="2.2"/></g><rect x="9.4" y="10.4" width="2.6" height="5.4" fill="#6fb1e6"/></svg>
<!-- explorer -->
<svg style="left:182px;top:584.5px" width="18" height="14" viewBox="0 0 18 14"><path d="M0.8 1.6 H6 L7.4 3 H17.2 V13 H0.8 Z" fill="#eebd3c"/><path d="M0.8 5 H17.2 V13 H0.8 Z" fill="#f7d565"/><path d="M3.4 8.4 H14.6 V13 H11.6 V10.8 H6.4 V13 H3.4 Z" fill="#6d9f8f"/></svg>
<div class="ul" style="left:177px;width:28px"></div>
<!-- edge -->
<svg style="left:217px;top:583.5px" width="19" height="19" viewBox="0 0 19 19"><circle cx="9.5" cy="9.5" r="8.8" fill="#2b86d3"/><path d="M0.8 10.4 C1 15 5 18.4 9.8 18.2 C13.4 18 16 16 17.2 13.4 C14 15.4 9.4 14.6 8 11.4 C7.4 9.6 7.8 8.4 8.6 7.4 C4.6 6.4 1.2 7.6 0.8 10.4 Z" fill="#35bf8d"/><path d="M5.6 9.4 C6.2 6.6 9 5.2 11.8 5.8 C14.4 6.4 15.6 8.6 15.2 10.6 H9.4 C9.6 12.4 11 13.6 13.2 13.8 C9.2 15.2 5 13 5.6 9.4 Z" fill="#e4f3fa"/></svg>
<!-- sogou browser -->
<svg style="left:252.5px;top:584px" width="17" height="17" viewBox="0 0 17 17"><circle cx="8.5" cy="8.5" r="8" fill="#4a90e2"/><circle cx="8.5" cy="8.5" r="7" fill="none" stroke="#9cc4f2" stroke-width="1"/><path d="M11.6 4.6 C8.6 2.6 5 4.2 5.4 6.8 C5.8 9.4 11.2 8.2 11.4 10.8 C11.6 13 8 13.8 5.2 12" fill="none" stroke="#ffffff" stroke-width="2.1" stroke-linecap="round"/></svg>
<!-- round photo app -->
<svg style="left:287px;top:584px" width="17" height="17" viewBox="0 0 17 17"><defs><clipPath id="cp2"><circle cx="8.5" cy="8.5" r="8.2"/></clipPath></defs><g clip-path="url(#cp2)"><rect width="17" height="17" fill="#7d766c"/><rect x="7.4" y="0" width="10" height="9" fill="#ecebe8"/><rect x="0" y="0" width="7.4" height="10" fill="#8f8779"/><rect x="4.4" y="2.4" width="4" height="12" fill="#2b2724"/><rect x="0" y="10.4" width="17" height="7" fill="#5f544b"/><rect x="9" y="9" width="8" height="4" fill="#b9a993"/></g></svg>
<div class="ul" style="left:282px;width:28px"></div>
<!-- word -->
<svg style="left:321px;top:584.5px" width="20" height="16" viewBox="0 0 20 16"><rect x="6" y="0.6" width="13.4" height="14.8" rx="1" fill="#2b7cd3"/><rect x="6" y="0.6" width="13.4" height="3.8" fill="#41a5ee"/><rect x="6" y="11.6" width="13.4" height="3.8" fill="#185abd"/><rect x="0.6" y="3.6" width="9.4" height="9" rx="0.8" fill="#185abd"/><path d="M2.2 5.6 L3.6 10.8 L5.2 6.8 L6.8 10.8 L8.4 5.6" fill="none" stroke="#ffffff" stroke-width="1.1"/></svg>
<div class="ul" style="left:317px;width:27px"></div>
<!-- tencent meeting (active) -->
<div style="left:349px;top:578px;width:34.5px;height:28px;background:#f5f1e1"></div>
<svg style="left:357.5px;top:584px" width="16" height="16" viewBox="0 0 16 16"><rect x="0.4" y="0.4" width="15.2" height="15.2" rx="2.4" fill="#1f6fe6"/><path d="M2.6 10.6 C3.6 7.4 5.4 6 6.8 6.8 C7.6 7.2 8 8.2 8.4 8.2 C8.8 8.2 9.4 6.6 10.6 6.4 C12 6.2 13 8 13.6 10.6 Z" fill="#ffffff"/></svg>
<div class="ul" style="left:349px;width:34.5px"></div>
<!-- system tray -->
<svg style="left:849px;top:587.5px" width="10" height="7" viewBox="0 0 10 7" fill="none" stroke="#2a2a2a" stroke-width="1.1"><path d="M0.8 6 L5 1.4 L9.2 6"/></svg>
<svg style="left:866px;top:586px" width="7.6" height="12.4" viewBox="0 0 9 15"><rect x="2.2" y="0.6" width="4.6" height="8.6" rx="1" fill="#1c1c1c"/><path d="M0.8 6.6 C0.8 12 8.2 12 8.2 6.6" fill="none" stroke="#6a6a6a" stroke-width="0.9"/><path d="M4.5 10.8 V13.4 M2.4 13.8 H6.6" stroke="#4a4a4a" stroke-width="1"/></svg>
<svg style="left:882.6px;top:586px" width="10.6" height="12.4" viewBox="0 0 12 14"><ellipse cx="6" cy="5" rx="3.4" ry="4" fill="#1f1f1f"/><ellipse cx="6" cy="9.4" rx="4.6" ry="3.8" fill="#2a2226"/><ellipse cx="6" cy="9.8" rx="2.6" ry="2.8" fill="#f3eef0"/><path d="M2.4 7.4 C4.6 8.8 7.4 8.8 9.6 7.4 L9.4 9 C7.2 10 4.8 10 2.6 9 Z" fill="#d3226a"/><path d="M1.4 12.4 H5 V13.6 H1.4 Z M7 12.4 H10.6 V13.6 H7 Z" fill="#e08a1e"/></svg>
<svg style="left:898.5px;top:588px" width="13" height="8" viewBox="0 0 13 8"><rect x="2" y="0.8" width="10.4" height="6.2" fill="#1d1d1d"/><rect x="0.4" y="2.2" width="3" height="3.6" fill="#1d1d1d"/><rect x="3.4" y="2" width="7.6" height="3.8" fill="#3a3a3a"/></svg>
<svg style="left:916px;top:586px" width="12" height="11" viewBox="0 0 12 11" fill="none" stroke="#6c6c6c" stroke-width="1.1"><path d="M1 10 C1 5 5 1 11 1"/><path d="M4 10 C4 7 7 4.2 11 4.2"/><path d="M7.4 10 C7.4 8.6 8.8 7.4 11 7.4"/><circle cx="10.4" cy="9.8" r="0.7" fill="#6c6c6c" stroke="none"/></svg>
<svg style="left:932.5px;top:586px" width="12" height="11" viewBox="0 0 12 11" fill="none" stroke="#3a3a3a" stroke-width="0.9"><path d="M0.8 3.8 H3 L5.6 1.4 V9.6 L3 7.2 H0.8 Z"/><path d="M7.2 3.8 C8 4.8 8 6.2 7.2 7.2 M8.8 2.4 C10.2 4.2 10.2 6.8 8.8 8.6 M10.4 1.2 C12.2 3.8 12.2 7.2 10.4 9.8" stroke-width="0.8"/></svg>
<div class="tk" style="left:949px;top:586px;width:10.5px;font-size:10.5px;color:#1a1a1a">中</div>
<div class="tk" style="left:967px;top:581px;width:43.5px">22:01 周日</div>
<div class="tk" style="left:969.5px;top:592px;width:38px">2021/8/8</div>
<svg style="left:1029px;top:585.5px" width="14" height="14" viewBox="0 0 14 14"><rect x="0.6" y="1.4" width="8" height="9.6" fill="#232323"/><rect x="2" y="0.4" width="8" height="9.6" fill="none" stroke="#4a4a4a" stroke-width="0.8"/><rect x="6.4" y="6.6" width="7" height="7" rx="1" fill="#b52a33"/></svg>
<svg style="left:1051px;top:586px" width="13" height="12" viewBox="0 0 13 12"><path d="M0.6 0.6 H11.4 V8.6 H6 L3.4 11 V8.6 H0.6 Z" fill="#1e1e1e"/><path d="M2.6 3 H9.4 M2.6 5.2 H9.4" stroke="#d8d2bc" stroke-width="0.9"/><circle cx="10.4" cy="8.8" r="2.3" fill="#ece4c6" stroke="#1e1e1e" stroke-width="0.9"/></svg>
<!-- muted-microphone floating indicator -->
<svg style="left:991px;top:560px" width="52" height="46" viewBox="0 0 52 46"><circle cx="26" cy="26.5" r="24.8" fill="#5c5c5c" fill-opacity="0.84"/><rect x="21" y="14" width="10" height="17" rx="5" fill="#e6e6e6"/><path d="M17 25.5 C17 37 35 37 35 25.5" fill="none" stroke="#e6e6e6" stroke-width="2"/><path d="M26 34.4 V40 M20.4 40.8 H31.6" stroke="#e6e6e6" stroke-width="2.2"/><path d="M36.6 9.5 L15.2 35.4" stroke="#d3a07e" stroke-width="1.6"/></svg>

</body>
</html>
